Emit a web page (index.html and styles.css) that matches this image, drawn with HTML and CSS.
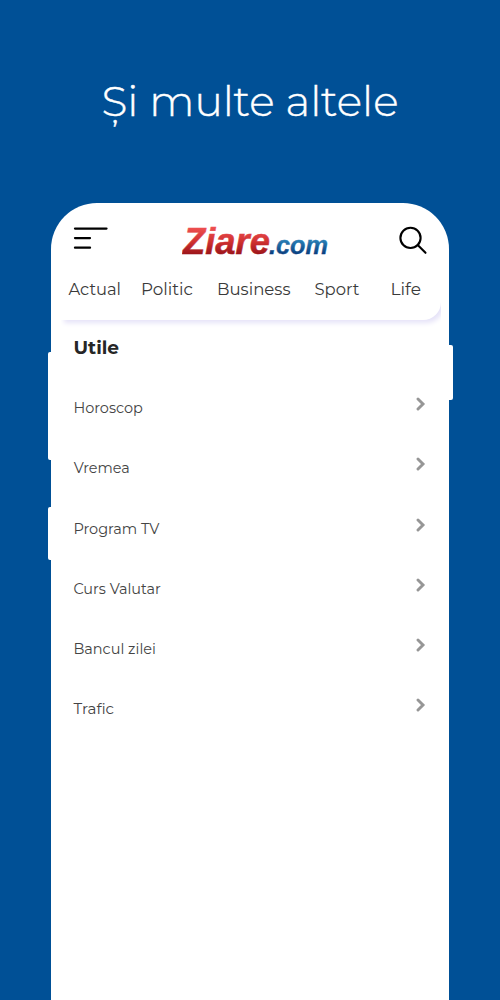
FILE: index.html
```html
<!DOCTYPE html>
<html lang="ro">
<head>
<meta charset="utf-8">
<meta name="viewport" content="width=device-width">
<title>Ziare.com</title>
<link rel="stylesheet" href="styles.css">
</head>
<body>
<main class="promo">
  <h1 class="headline"><svg class="label" width="500" height="60"><text x="101.5" y="46.2" textLength="297" lengthAdjust="spacingAndGlyphs">Și multe altele</text></svg></h1>
  <section class="phone">
    <i class="key key-volume"></i><i class="key key-assist"></i><i class="key key-power"></i>
    <header class="topbar">
      <svg class="menu" width="37" height="26" viewBox="0 0 37 26"><path d="M3 2.6H34.5M3 12.1H18M3 21.7H18"/></svg>
      <svg class="logo" width="152" height="44" viewBox="0 0 152 44">
        <defs>
          <linearGradient id="red" x1="0" y1="0" x2="0" y2="1"><stop offset=".15" stop-color="#ee5050"/><stop offset=".5" stop-color="#cf3031"/><stop offset=".82" stop-color="#981318"/></linearGradient>
          <linearGradient id="blue" x1="0" y1="0" x2="0" y2="1"><stop offset=".3" stop-color="#2b83b9"/><stop offset=".8" stop-color="#083d7d"/></linearGradient>
        </defs>
        <text class="logo-name" x="1" y="35.4" textLength="87" lengthAdjust="spacingAndGlyphs">Ziare</text>
        <text class="logo-domain" x="87" y="35.4" textLength="59" lengthAdjust="spacingAndGlyphs">.com</text>
      </svg>
      <svg class="search" width="30" height="30" viewBox="0 0 30 30"><circle cx="12.5" cy="11.9" r="10.1"/><path d="M19.7 19.1L27.5 26.8"/></svg>
    </header>
    <div class="nav-shade">
      <nav class="tabs">
        <svg class="label" width="380" height="30">
          <text x="7.5" y="18" textLength="52.5" lengthAdjust="spacingAndGlyphs">Actual</text>
          <text x="80" y="18" textLength="52" lengthAdjust="spacingAndGlyphs">Politic</text>
          <text x="156" y="18" textLength="73.5" lengthAdjust="spacingAndGlyphs">Business</text>
          <text x="253.5" y="18" textLength="45" lengthAdjust="spacingAndGlyphs">Sport</text>
          <text x="329.5" y="18" textLength="30.5" lengthAdjust="spacingAndGlyphs">Life</text>
        </svg>
      </nav>
    </div>
    <h2 class="section-title"><svg class="label" width="100" height="26"><text x="0.5" y="20" textLength="45.5" lengthAdjust="spacingAndGlyphs">Utile</text></svg></h2>
    <ul class="links">
      <li><svg class="label" width="120" height="24"><text x="0.4" y="17" textLength="69.5" lengthAdjust="spacingAndGlyphs">Horoscop</text></svg><svg class="chevron" viewBox="0 0 10 14"><path d="M2 2L7 7L2 12"/></svg></li>
      <li><svg class="label" width="120" height="24"><text x="0.7" y="17" textLength="56" lengthAdjust="spacingAndGlyphs">Vremea</text></svg><svg class="chevron" viewBox="0 0 10 14"><path d="M2 2L7 7L2 12"/></svg></li>
      <li><svg class="label" width="120" height="24"><text x="0.4" y="16.6" textLength="86" lengthAdjust="spacingAndGlyphs">Program TV</text></svg><svg class="chevron" viewBox="0 0 10 14"><path d="M2 2L7 7L2 12"/></svg></li>
      <li><svg class="label" width="120" height="24"><text x="0.4" y="17" textLength="87.5" lengthAdjust="spacingAndGlyphs">Curs Valutar</text></svg><svg class="chevron" viewBox="0 0 10 14"><path d="M2 2L7 7L2 12"/></svg></li>
      <li><svg class="label" width="120" height="24"><text x="0.4" y="17" textLength="82.5" lengthAdjust="spacingAndGlyphs">Bancul zilei</text></svg><svg class="chevron" viewBox="0 0 10 14"><path d="M2 2L7 7L2 12"/></svg></li>
      <li><svg class="label" width="120" height="24"><text x="0.6" y="17" textLength="40.5" lengthAdjust="spacingAndGlyphs">Trafic</text></svg><svg class="chevron" viewBox="0 0 10 14"><path d="M2 2L7 7L2 12"/></svg></li>
    </ul>
  </section>
</main>
</body>
</html>
```
FILE: styles.css
```css
* { box-sizing: border-box; }
body { margin: 0; background: #005096; font-family: Montserrat, Inter, sans-serif; }
h1, h2, ul { margin: 0; padding: 0; list-style: none; }
svg { display: block; flex: none; }
.promo { height: 1000px; padding-top: 70px; overflow: hidden; }
.headline { height: 133px; font-size: 41.8px; font-weight: 300; }
.headline text { fill: #fff; stroke: #fff; stroke-width: .4; }
.phone { position: relative; width: 398.5px; height: 797px; margin-left: 50.8px; background: #fff; border-radius: 46px 46px 0 0; }
.key { position: absolute; width: 6px; background: #fff; border-radius: 2px; }
.key-volume { left: -3.3px; top: 149px; height: 108px; }
.key-assist { left: -3.3px; top: 304px; height: 53px; }
.key-power { right: -3.3px; top: 142px; height: 55px; }
.topbar { display: flex; justify-content: space-between; align-items: flex-start; height: 74px; padding: 16px 21.2px 0 21.2px; }
.menu { margin-top: 7px; }
.logo { margin: 0 -8px 0 0; }
.search { margin-top: 7px; }
.menu path, .search { fill: none; stroke: #000; stroke-width: 2.3; stroke-linecap: round; }
.search { stroke-width: 2.1; }
.logo text { font-family: "Liberation Sans", Arial, sans-serif; font-weight: 700; font-style: italic; }
.logo-name { fill: url(#red); stroke: url(#red); stroke-width: .5; font-size: 37px; }
.logo-domain { fill: url(#blue); stroke: url(#blue); stroke-width: .3; font-size: 26px; }
.nav-shade { width: 380px; height: 54px; margin-left: 10.2px; overflow: hidden; }
.tabs { height: 43.4px; background: #fff; border-radius: 0 0 18px 0; box-shadow: 3px 3px 5px 0 #e6e3f8; font-size: 17px; font-weight: 400; }
.tabs text { fill: #3a3a3a; }
.section-title { height: 26px; margin: 3px 0 0 22.5px; font-size: 18.6px; font-weight: 700; }
.section-title text { fill: #262626; }
.links { padding: 36px 23.3px 0 22.7px; }
.links li { display: flex; justify-content: space-between; height: 60.3px; font-size: 14.8px; font-weight: 400; }
.links text { fill: #444; }
.chevron { width: 10px; height: 14px; margin-top: 1px; fill: none; stroke: #969696; stroke-width: 2.9; stroke-linecap: round; }
```
